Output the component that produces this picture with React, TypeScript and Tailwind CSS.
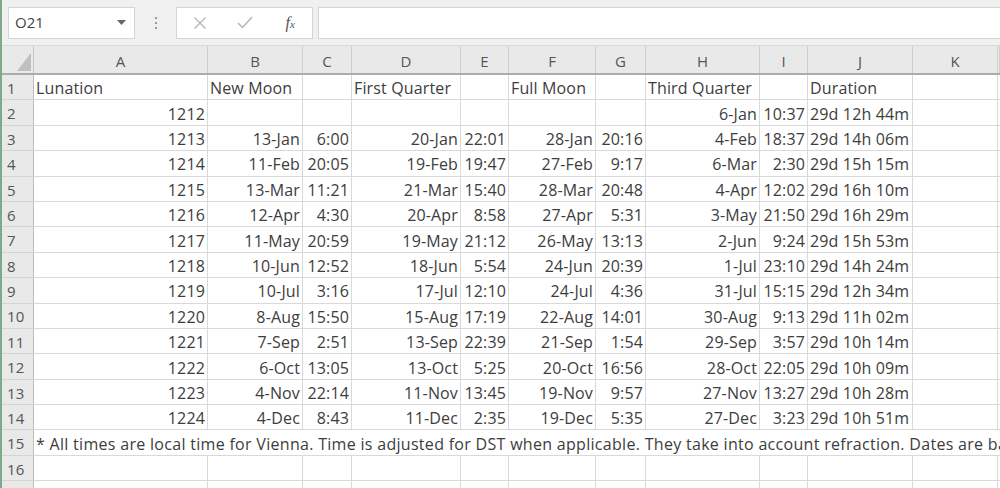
import React from 'react';

const COLS = ['A', 'B', 'C', 'D', 'E', 'F', 'G', 'H', 'I', 'J', 'K', ''];

// [lunation, newDate, newTime, fqDate, fqTime, fullDate, fullTime, tqDate, tqTime, duration]
const ROWS: string[][] = [
  ['1212', '', '', '', '', '', '', '6-Jan', '10:37', '29d 12h 44m'],
  ['1213', '13-Jan', '6:00', '20-Jan', '22:01', '28-Jan', '20:16', '4-Feb', '18:37', '29d 14h 06m'],
  ['1214', '11-Feb', '20:05', '19-Feb', '19:47', '27-Feb', '9:17', '6-Mar', '2:30', '29d 15h 15m'],
  ['1215', '13-Mar', '11:21', '21-Mar', '15:40', '28-Mar', '20:48', '4-Apr', '12:02', '29d 16h 10m'],
  ['1216', '12-Apr', '4:30', '20-Apr', '8:58', '27-Apr', '5:31', '3-May', '21:50', '29d 16h 29m'],
  ['1217', '11-May', '20:59', '19-May', '21:12', '26-May', '13:13', '2-Jun', '9:24', '29d 15h 53m'],
  ['1218', '10-Jun', '12:52', '18-Jun', '5:54', '24-Jun', '20:39', '1-Jul', '23:10', '29d 14h 24m'],
  ['1219', '10-Jul', '3:16', '17-Jul', '12:10', '24-Jul', '4:36', '31-Jul', '15:15', '29d 12h 34m'],
  ['1220', '8-Aug', '15:50', '15-Aug', '17:19', '22-Aug', '14:01', '30-Aug', '9:13', '29d 11h 02m'],
  ['1221', '7-Sep', '2:51', '13-Sep', '22:39', '21-Sep', '1:54', '29-Sep', '3:57', '29d 10h 14m'],
  ['1222', '6-Oct', '13:05', '13-Oct', '5:25', '20-Oct', '16:56', '28-Oct', '22:05', '29d 10h 09m'],
  ['1223', '4-Nov', '22:14', '11-Nov', '13:45', '19-Nov', '9:57', '27-Nov', '13:27', '29d 10h 28m'],
  ['1224', '4-Dec', '8:43', '11-Dec', '2:35', '19-Dec', '5:35', '27-Dec', '3:23', '29d 10h 51m'],
];

const HEADINGS = ['Lunation', 'New Moon', '', 'First Quarter', '', 'Full Moon', '', 'Third Quarter', '', 'Duration', '', ''];

const grid = 'grid grid-cols-[34px_174px_95px_49px_109px_48px_87px_50px_114px_48px_105px_85px_1fr]';

function RowHead({ n }: { n: number }) {
  return (
    <div className="h-[25.4px] bg-[#e9e9e9] border-r border-b border-r-[#bdbdbd] border-b-[#d4d4d4] pl-[7px] pt-[2px] flex items-center text-[15px] text-[#555]">
      {n}
    </div>
  );
}

function Cell({ children, right }: { children?: React.ReactNode; right?: boolean }) {
  return (
    <div
      className={`h-[25.4px] border-r border-b border-[#d9d9d9] px-[2px] pt-[2px] flex items-center whitespace-nowrap overflow-hidden ${
        right ? 'justify-end' : 'justify-start'
      }`}
    >
      {children}
    </div>
  );
}

export default function App() {
  return (
    <div className="relative w-[1000px] h-[488px] overflow-hidden bg-white text-[#3d3d3d] font-['Open_Sans','Liberation_Sans',sans-serif]">
      {/* left accent */}
      <div className="absolute left-0 top-0 bottom-0 w-[2px] bg-[#7fa98c] z-10" />

      {/* formula bar */}
      <div className="h-[46px] bg-[#f0f0f0] border-b border-[#dadada] flex items-center pl-[8px]">
        <div className="w-[127px] h-[32px] bg-white border border-[#d5d5d5] flex items-center justify-between pl-[6px] pr-[8px] text-[15px] text-[#444]">
          <span>O21</span>
          <svg width="9" height="5" viewBox="0 0 9 5">
            <path d="M0 0h9L4.5 5z" fill="#666" />
          </svg>
        </div>
        <div className="w-[41px] flex flex-col items-center gap-[3px]">
          <span className="w-[2px] h-[2px] bg-[#9a9a9a]" />
          <span className="w-[2px] h-[2px] bg-[#9a9a9a]" />
          <span className="w-[2px] h-[2px] bg-[#9a9a9a]" />
        </div>
        <div className="w-[137px] h-[32px] bg-white border border-[#d5d5d5] flex items-center">
          <div className="w-[46px] flex justify-center">
            <svg width="14" height="14" viewBox="0 0 14 14">
              <path d="M1.5 1.5l11 11M12.5 1.5l-11 11" stroke="#b5b5b5" strokeWidth="1.4" />
            </svg>
          </div>
          <div className="w-[46px] flex justify-center">
            <svg width="16" height="13" viewBox="0 0 16 13">
              <path d="M1 7l4.5 4.5L15 1" stroke="#b5b5b5" strokeWidth="1.5" fill="none" />
            </svg>
          </div>
          <div className="w-[44px] flex justify-center text-[#555] italic text-[16px] font-['Liberation_Serif',serif]">
            <span>
              f<span className="text-[11px]">x</span>
            </span>
          </div>
        </div>
        <div className="ml-[5px] flex-1 h-[32px] bg-white border border-[#d5d5d5] border-r-0" />
      </div>

      {/* column header */}
      <div className={`${grid} h-[29px] bg-[#e9e9e9] border-b-2 border-[#ababab]`}>
        <div className="relative border-r border-[#c8c8c8]">
          <svg className="absolute right-[2px] bottom-[2px]" width="14" height="18" viewBox="0 0 14 18">
            <path d="M14 0V18H0z" fill="#bfbfbf" />
          </svg>
        </div>
        {COLS.map((c, i) => (
          <div key={i} className="border-r border-[#cfcfcf] flex items-center justify-center pt-[3px] text-[15px] text-[#555]">
            {c}
          </div>
        ))}
      </div>

      {/* rows */}
      <div className={`${grid} text-[16px] tracking-[0.15px]`}>
        <RowHead n={1} />
        {HEADINGS.map((h, i) => (
          <Cell key={i}>{h}</Cell>
        ))}

        {ROWS.map((r, ri) => (
          <React.Fragment key={ri}>
            <RowHead n={ri + 2} />
            {r.slice(0, 9).map((v, i) => (
              <Cell key={i} right>
                {v}
              </Cell>
            ))}
            <Cell>{r[9]}</Cell>
            <Cell />
            <Cell />
          </React.Fragment>
        ))}

        <RowHead n={15} />
        <div className="col-span-12 h-[25.4px] border-b border-[#d9d9d9] px-[2px] pt-[2px] flex items-center whitespace-nowrap overflow-hidden tracking-[0.3px]">
          * All times are local time for Vienna. Time is adjusted for DST when applicable. They take into account refraction. Dates are based on the Gregorian calendar.
        </div>

        <RowHead n={16} />
        {COLS.map((_, i) => (
          <Cell key={i} />
        ))}
        <RowHead n={17} />
        {COLS.map((_, i) => (
          <Cell key={i} />
        ))}
      </div>
    </div>
  );
}
